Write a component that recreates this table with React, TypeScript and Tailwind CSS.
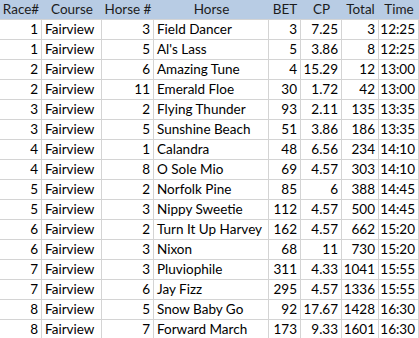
import React from 'react'

const HEADERS = ['Race#', 'Course', 'Horse #', 'Horse', 'BET', 'CP', 'Total', 'Time']

// [race, course, horseNo, horse, bet, cp, total, time]
const ROWS: (string | number)[][] = [
  [1, 'Fairview', 3, 'Field Dancer', 3, '7.25', 3, '12:25'],
  [1, 'Fairview', 5, "Al's Lass", 5, '3.86', 8, '12:25'],
  [2, 'Fairview', 6, 'Amazing Tune', 4, '15.29', 12, '13:00'],
  [2, 'Fairview', 11, 'Emerald Floe', 30, '1.72', 42, '13:00'],
  [3, 'Fairview', 2, 'Flying Thunder', 93, '2.11', 135, '13:35'],
  [3, 'Fairview', 5, 'Sunshine Beach', 51, '3.86', 186, '13:35'],
  [4, 'Fairview', 1, 'Calandra', 48, '6.56', 234, '14:10'],
  [4, 'Fairview', 8, 'O Sole Mio', 69, '4.57', 303, '14:10'],
  [5, 'Fairview', 2, 'Norfolk Pine', 85, '6', 388, '14:45'],
  [5, 'Fairview', 3, 'Nippy Sweetie', 112, '4.57', 500, '14:45'],
  [6, 'Fairview', 2, 'Turn It Up Harvey', 162, '4.57', 662, '15:20'],
  [6, 'Fairview', 3, 'Nixon', 68, '11', 730, '15:20'],
  [7, 'Fairview', 3, 'Pluviophile', 311, '4.33', 1041, '15:55'],
  [7, 'Fairview', 6, 'Jay Fizz', 295, '4.57', 1336, '15:55'],
  [8, 'Fairview', 5, 'Snow Baby Go', 92, '17.67', 1428, '16:30'],
  [8, 'Fairview', 7, 'Forward March', 173, '9.33', 1601, '16:30'],
]

// text columns are left aligned, everything else right aligned
const LEFT = [1, 3]

export default function App() {
  return (
    <div className="w-[419px] h-[338px] overflow-hidden bg-white font-['Lato','Liberation_Sans',sans-serif] text-[13.5px] leading-none text-black">
      <div className="grid grid-cols-[42px_60px_52px_115px_32px_41px_37px_40px]">
        {HEADERS.map((h) => (
          <div
            key={h}
            className="h-[20px] flex items-center justify-center bg-[#b8cce4] border-b border-[#d4d4d4] text-[#1c1c1c] whitespace-nowrap"
          >
            {h}
          </div>
        ))}
        {ROWS.map((row, r) =>
          row.map((v, c) => (
            <div
              key={`${r}-${c}`}
              className={`h-[20px] flex items-center border-r border-b border-[#d4d4d4] whitespace-nowrap overflow-hidden ${
                LEFT.includes(c) ? 'justify-start pl-[3px]' : 'justify-end pr-[3px]'
              }`}
            >
              {v}
            </div>
          ))
        )}
      </div>
    </div>
  )
}
